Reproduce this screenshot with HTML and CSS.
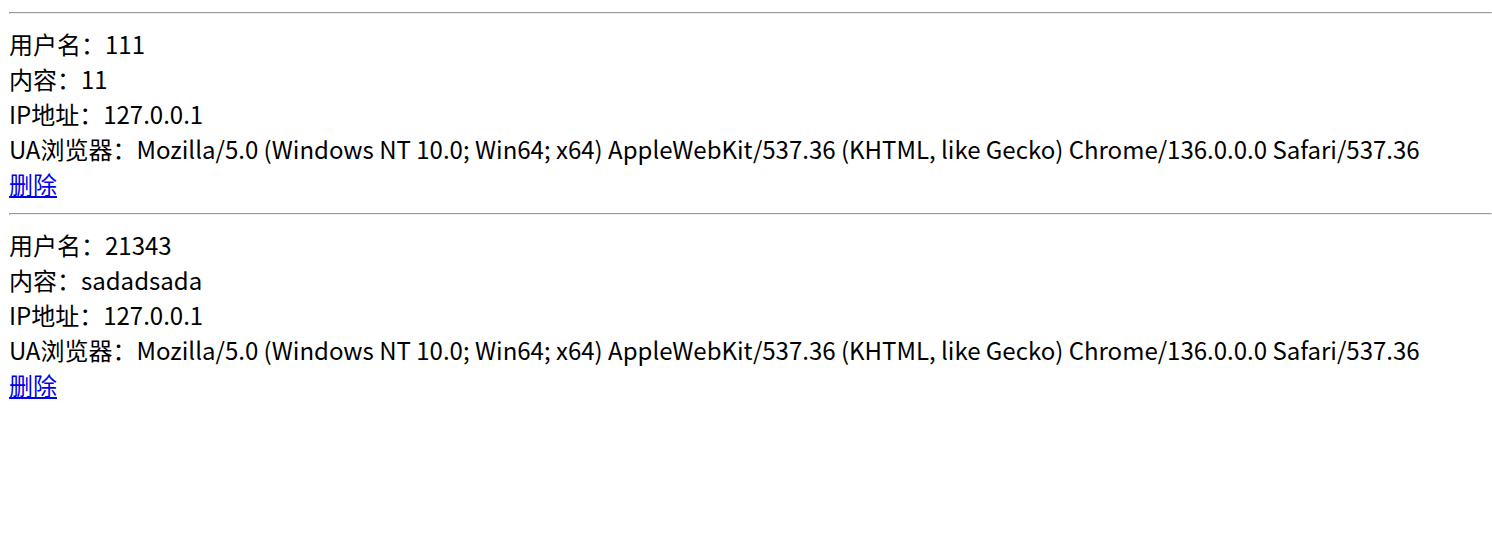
FILE: index.html
```html
<!DOCTYPE html>
<html lang="zh-CN">
<head>
<meta charset="utf-8">
<title>留言列表</title>
<link rel="stylesheet" href="styles.css">
</head>
<body>
<hr class="sep">
<div class="entry">
  <div class="row">用户名：111</div>
  <div class="row">内容：11</div>
  <div class="row">IP地址：127.0.0.1</div>
  <div class="row">UA浏览器：Mozilla/5.0 (Windows NT 10.0; Win64; x64) AppleWebKit/537.36 (KHTML, like Gecko) Chrome/136.0.0.0 Safari/537.36</div>
  <div class="row"><a class="del" href="#">删除</a></div>
</div>
<hr class="sep">
<div class="entry">
  <div class="row">用户名：21343</div>
  <div class="row">内容：sadadsada</div>
  <div class="row">IP地址：127.0.0.1</div>
  <div class="row">UA浏览器：Mozilla/5.0 (Windows NT 10.0; Win64; x64) AppleWebKit/537.36 (KHTML, like Gecko) Chrome/136.0.0.0 Safari/537.36</div>
  <div class="row"><a class="del" href="#">删除</a></div>
</div>
</body>
</html>
```

FILE: styles.css
```css
body {
  margin: 0;
  padding: 0 0 0 9px;
  font-family: "Noto Sans CJK SC", "Noto Sans", sans-serif;
  font-size: 24px;
  color: #000;
  background: #fff;
}
.sep {
  margin: 12px 0;
}
.row {
  white-space: nowrap;
}
.del {
  color: #0000ee;
  text-decoration: underline;
}
```
